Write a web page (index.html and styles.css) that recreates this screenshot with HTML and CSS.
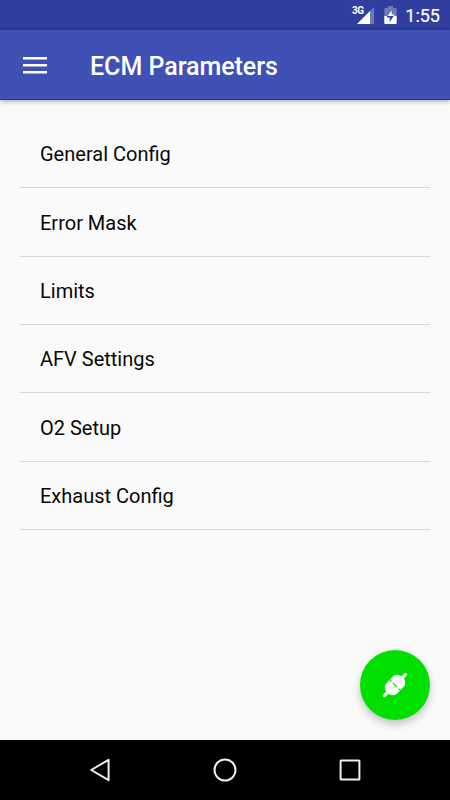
FILE: index.html
```html
<!DOCTYPE html>
<html lang="en">
<head>
<meta charset="utf-8">
<title>ECM Parameters</title>
<link rel="stylesheet" href="styles.css">
</head>
<body>
<div class="screen">
  <div class="status-bar">
    <svg class="signal" viewBox="0 0 24 20" width="24" height="20">
      <path d="M24 0V17H7Z" fill="#fff" fill-opacity=".3"/>
      <path d="M20 4V17H7Z" fill="#fff"/>
    </svg>
    <span class="network">3G</span>
    <svg class="battery" viewBox="0 0 13 18" width="13" height="18">
      <path d="M4 0H9V2H12Q12.7 2 12.7 3V10H.3V3Q.3 2 1 2H4Z" fill="#fff" fill-opacity=".3"/>
      <path d="M.3 10H12.7V17Q12.7 18 12 18H1Q.3 18 .3 17Z" fill="#fff"/>
      <path d="M3.4 10H9.7L5.7 16V11.6H2.4Z" fill="#303f9f"/>
      <path d="M7.7 4.4V8.4H10.7L9.7 10H3.6Z" fill="#fff"/>
    </svg>
    <span class="clock">1:55</span>
  </div>
  <header class="app-bar">
    <svg class="menu" viewBox="0 0 24 18" width="24" height="18">
      <path d="M0 0H24V2.5H0ZM0 7H24V9.5H0ZM0 14H24V16.5H0Z" fill="#fff"/>
    </svg>
    <h1 class="title">ECM Parameters</h1>
  </header>
  <main class="content">
    <ul class="list">
      <li>General Config</li>
      <li>Error Mask</li>
      <li>Limits</li>
      <li>AFV Settings</li>
      <li>O2 Setup</li>
      <li>Exhaust Config</li>
    </ul>
    <button class="fab" aria-label="Connect">
      <svg viewBox="0 0 30 30" width="30" height="30">
        <g transform="translate(15 15) rotate(-45)" fill="#fff">
          <path d="M-14.7 -1.7H-9V1.7H-14.7Q-16.5 1.7 -16.5 0T-14.7 -1.7ZM9 -1.7H14.7Q16.5 -1.7 16.5 0T14.7 1.7H9Z"/>
          <path d="M-.6 -7.5H-4.2C-8.4 -7.5 -11 -3.7 -11 0S-8.4 7.5 -4.2 7.5H-.6Z"/>
          <path d="M.6 -7.5H4.2C8.4 -7.5 11 -3.7 11 0S8.4 7.5 4.2 7.5H.6Z"/>
          <path d="M-1 -5H1V-3H-1ZM-1 3H1V5H-1Z"/>
        </g>
      </svg>
    </button>
  </main>
  <nav class="nav-bar">
    <svg viewBox="0 0 30 30" width="30" height="30"><path d="M23.6 4.8V25.2L6.2 15Z"/></svg>
    <svg viewBox="0 0 30 30" width="30" height="30"><circle cx="15" cy="15" r="10.5"/></svg>
    <svg viewBox="0 0 30 30" width="30" height="30"><rect x="5.6" y="5.6" width="18.8" height="18.8" rx=".5"/></svg>
  </nav>
</div>
</body>
</html>
```
FILE: styles.css
```css
* { box-sizing: border-box; }
body { margin: 0; font-family: Roboto, "Liberation Sans", sans-serif; }
.screen {
  width: 450px;
  height: 800px;
  display: flex;
  flex-direction: column;
  overflow: hidden;
  background: #fafafa;
}
.status-bar {
  position: relative;
  height: 30px;
  flex: none;
  display: flex;
  align-items: flex-start;
  justify-content: flex-end;
  padding: 7px 10px 0 0;
  background: linear-gradient(#303f9f 26px, #2b388e 30px);
  color: #fff;
}
.signal { margin-right: 10px; }
.network {
  position: absolute;
  left: 352px;
  top: 5px;
  font-size: 10px;
  line-height: 11px;
  font-weight: 700;
  letter-spacing: -.4px;
}
.battery { margin: -1px 8px 0 0; }
.clock { font-size: 18px; line-height: 18px; font-weight: 400; -webkit-text-stroke: .2px #fff; }
.app-bar {
  position: relative;
  z-index: 1;
  height: 70px;
  flex: none;
  display: flex;
  align-items: center;
  padding-left: 23px;
  background: #3f51b5;
  border-bottom: 1px solid #1238b0;
  box-shadow: 0 2px 4px rgba(0, 0, 0, .28);
}
.menu { margin-top: 2px; }
.title {
  margin: 4px 0 0 43px;
  color: #fff;
  font-size: 25px;
  line-height: 30px;
  font-weight: 500;
  letter-spacing: -.03px;
}
.content { position: relative; flex: 1; padding: 20px 20px 0; }
.list { margin: 0; padding: 0; list-style: none; }
.list li {
  height: 68.333px;
  display: flex;
  align-items: center;
  padding: 1.4px 20px 0;
  border-bottom: 1px solid #d8d8d8;
  color: #080808;
  font-size: 20px;
  line-height: 24px;
}
.fab {
  position: absolute;
  right: 20px;
  bottom: 20px;
  width: 70px;
  height: 70px;
  display: flex;
  align-items: center;
  justify-content: center;
  padding: 0;
  border: 0;
  border-radius: 50%;
  background: #00e000;
  box-shadow: 0 5px 9px rgba(0, 0, 0, .2), 0 0 4px rgba(0, 0, 0, .06);
}
.nav-bar {
  height: 60px;
  flex: none;
  display: flex;
  align-items: center;
  justify-content: center;
  gap: 95px;
  background: #000;
}
.nav-bar svg { fill: none; stroke: #eee; stroke-width: 2; stroke-linejoin: round; }
```
